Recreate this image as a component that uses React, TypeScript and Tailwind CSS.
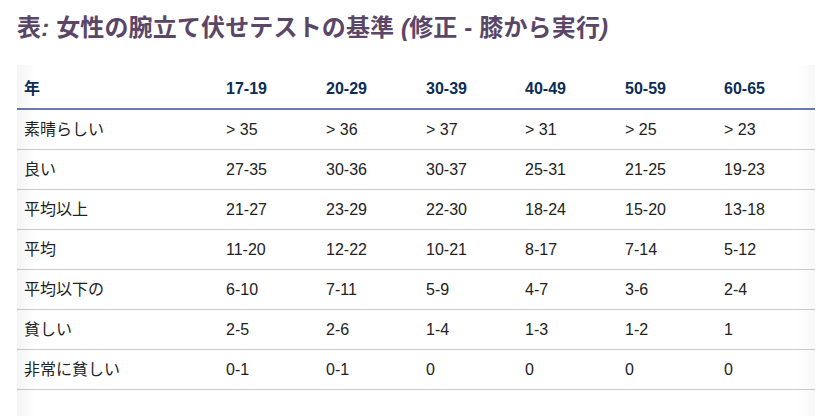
import React from "react";

const headers = ["年", "17-19", "20-29", "30-39", "40-49", "50-59", "60-65"];
const rows: string[][] = [
  ["素晴らしい", "> 35", "> 36", "> 37", "> 31", "> 25", "> 23"],
  ["良い", "27-35", "30-36", "30-37", "25-31", "21-25", "19-23"],
  ["平均以上", "21-27", "23-29", "22-30", "18-24", "15-20", "13-18"],
  ["平均", "11-20", "12-22", "10-21", "8-17", "7-14", "5-12"],
  ["平均以下の", "6-10", "7-11", "5-9", "4-7", "3-6", "2-4"],
  ["貧しい", "2-5", "2-6", "1-4", "1-3", "1-2", "1"],
  ["非常に貧しい", "0-1", "0-1", "0", "0", "0", "0"],
];

const widths = ["w-[202px]", "w-[100px]", "w-[100px]", "w-[99px]", "w-[100px]", "w-[99px]", "w-[98px]"];

export default function App() {
  return (
    <div
      className="w-[818px] h-[416px] overflow-hidden bg-white pl-[17px] pt-[13px]"
      style={{ fontFamily: '"Liberation Sans", Arial, "Noto Sans CJK JP", sans-serif' }}
    >
      <h2 className="text-[24px] leading-[30px] font-bold text-[#5a4768] mb-[22px] tracking-[0.15px]">
        表<span className="italic">:</span> 女性の腕立て伏せテストの基準 <span className="italic">(</span>修正 - 膝から実行<span className="italic">)</span>
      </h2>
      <div className="relative w-[798px] pb-[40px]">
        <table className="table-fixed border-collapse w-[798px]">
          <colgroup>
            {widths.map((w, i) => (
              <col key={i} className={w} />
            ))}
          </colgroup>
          <thead>
            <tr className="border-b-2 border-[#6b7bb6]">
              {headers.map((h) => (
                <th
                  key={h}
                  className="text-left pl-[7px] pt-[13px] pb-[9px] text-[16px] leading-[21px] font-bold text-[#0c2d57]"
                >
                  {h}
                </th>
              ))}
            </tr>
          </thead>
          <tbody>
            {rows.map((r) => (
              <tr key={r[0]} className="border-b border-[#cccccc]">
                {r.map((c, i) => (
                  <td
                    key={i}
                    className="pl-[7px] py-[9px] text-[16px] leading-[21px] text-[#222222] whitespace-nowrap"
                  >
                    {c}
                  </td>
                ))}
              </tr>
            ))}
          </tbody>
        </table>
        <div className="pointer-events-none absolute left-0 top-0 bottom-[-20px] w-[18px] bg-gradient-to-r from-[rgba(0,0,0,0.045)] to-transparent" />
        <div className="pointer-events-none absolute right-0 top-0 bottom-[-20px] w-[18px] bg-gradient-to-l from-[rgba(0,0,0,0.03)] to-transparent" />
      </div>
    </div>
  );
}
